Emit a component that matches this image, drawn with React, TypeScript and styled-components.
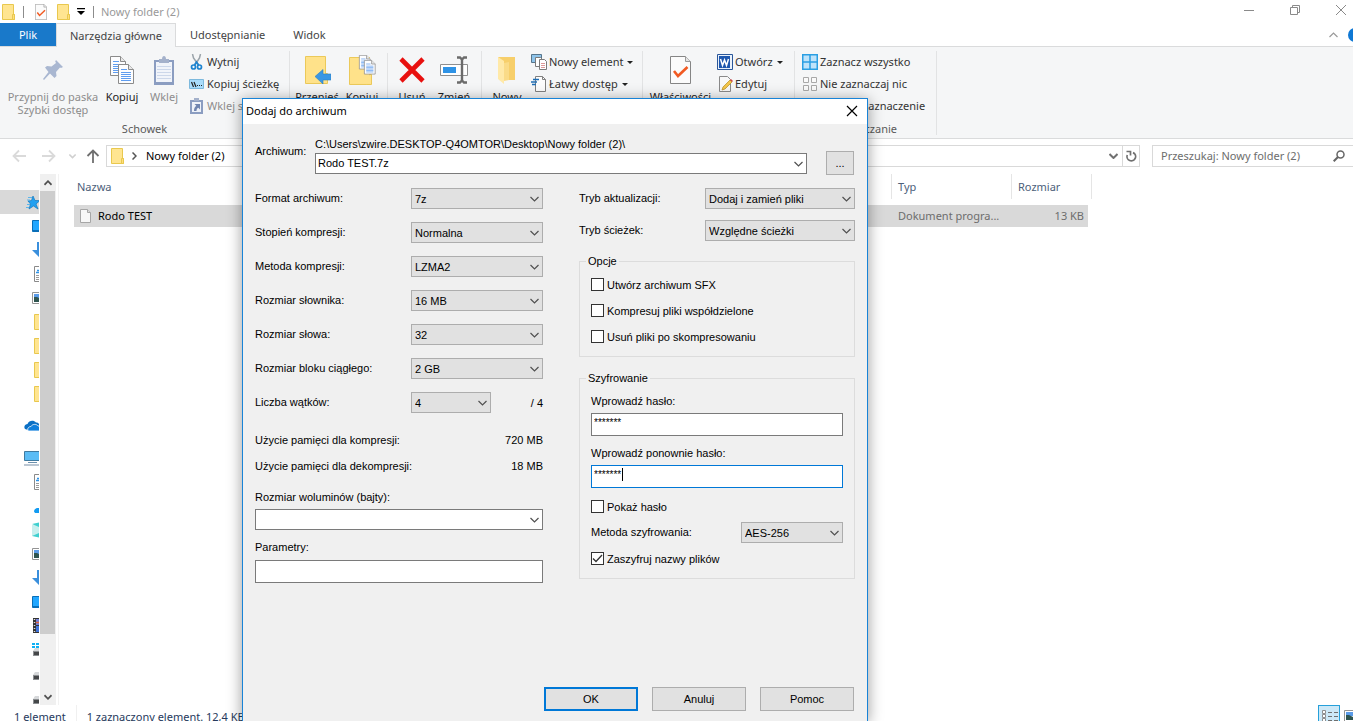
import React from "react";
import styled, { createGlobalStyle, css } from "styled-components";

const ui = '"Noto Sans", "Open Sans", sans-serif';
const classic = '"Liberation Sans", Arial, sans-serif';

const GlobalStyle = createGlobalStyle`
  *, *::before, *::after { box-sizing: border-box; }
  body { margin: 0; background: #fff; }
  button, input, select { font: inherit; color: inherit; margin: 0; border-radius: 0; }
  button { padding: 0; border: 0; background: none; }
  svg { display: block; flex: none; }
`;

const Explorer = styled.div`
  position: relative;
  display: flex;
  flex-direction: column;
  height: 100vh;
  overflow: hidden;
  font: 11px/16px ${ui};
  color: #1e1e1e;
`;

/* ---------- title bar ---------- */

const TitleBar = styled.header`
  display: flex;
  align-items: center;
  height: 23px;
  flex: none;
  padding-left: 2px;
`;

const QuickAccess = styled.div`
  display: flex;
  align-items: center;
  padding-left: 8px;
`;

const QuickButton = styled.button<{ $w: number }>`
  display: flex;
  justify-content: center;
  width: ${(p) => p.$w}px;
`;

const Tick = styled.span`
  width: 1px;
  height: 12px;
  background: #8c8c8c;
`;

const WindowTitle = styled.h1`
  margin: 0 0 0 7px;
  font-size: 11px;
  font-weight: 400;
  color: #999;
`;

const Captions = styled.div`
  display: flex;
  align-self: flex-start;
  margin-left: auto;
  margin-right: -11px;
`;

const CaptionButton = styled.button`
  display: flex;
  align-items: center;
  justify-content: center;
  width: 46px;
  height: 20px;
`;

/* ---------- ribbon ---------- */

const Tabs = styled.nav`
  display: flex;
  flex: none;
  height: 24px;
  border-bottom: 1px solid #dadbdc;
`;

const Tab = styled.button<{ $kind?: "file" | "active" }>`
  height: 24px;
  padding: 0 14px;
  color: #444;
  ${(p) =>
    p.$kind === "file" &&
    css`
      width: 56px;
      height: 23px;
      background: #1979ca;
      color: #fff;
    `}
  ${(p) =>
    p.$kind === "active" &&
    css`
      background: #f5f6f7;
      border: 1px solid #dadbdc;
      border-bottom: 0;
      padding: 0 13px;
    `}
`;

const TabTools = styled.div`
  display: flex;
  align-items: center;
  gap: 10px;
  margin: 0 -9px 0 auto;
`;

const Ribbon = styled.section`
  display: flex;
  flex: none;
  height: 92px;
  padding-top: 4px;
  background: #f5f6f7;
  border-bottom: 1px solid #dadbdc;
`;

const Group = styled.div<{ $width: number }>`
  display: flex;
  flex-direction: column;
  justify-content: space-between;
  width: ${(p) => p.$width}px;
  margin-bottom: 3px;
  border-right: 1px solid #e2e3e4;
`;

const GroupBody = styled.div`
  display: flex;
  padding-left: 4px;
`;

const GroupLabel = styled.div`
  line-height: 13px;
  text-align: center;
  color: #5a5a5a;
`;

const InnerRule = styled.span`
  width: 1px;
  height: 68px;
  margin: 2px 3px 0;
  background: #e2e3e4;
`;

const BigButton = styled.button<{ $w: number; $off?: boolean }>`
  display: flex;
  flex-direction: column;
  align-items: center;
  gap: 4px;
  width: ${(p) => p.$w}px;
  padding-top: 3px;
  line-height: 13px;
  white-space: nowrap;
  color: ${(p) => (p.$off ? "#8d8d8d" : "#1e1e1e")};
`;

const BigIcon = styled.span`
  display: flex;
  align-items: center;
  height: 32px;
`;

const SmallColumn = styled.div`
  display: flex;
  flex-direction: column;
  align-items: flex-start;
`;

const SmallButton = styled.button<{ $off?: boolean }>`
  display: flex;
  align-items: center;
  gap: 2px;
  height: 22px;
  padding-left: 3px;
  white-space: nowrap;
  color: ${(p) => (p.$off ? "#8d8d8d" : "#333")};
`;

const Caret = styled.span`
  margin-left: 2px;
  border: 3px solid transparent;
  border-top-color: #222;
  border-bottom: 0;
`;

/* ---------- address bar ---------- */

const AddressRow = styled.div`
  display: flex;
  flex: none;
  height: 35px;
  padding-top: 6px;
`;

const NavButtons = styled.div`
  display: flex;
  align-items: center;
  height: 22px;
  width: 106px;
  padding-left: 4px;
`;

const NavButton = styled.button<{ $w: number }>`
  display: flex;
  justify-content: center;
  width: ${(p) => p.$w}px;
`;

const AddressBox = styled.div`
  display: flex;
  align-items: center;
  flex: 1;
  height: 22px;
  padding-left: 4px;
  border: 1px solid #d9d9d9;
  color: #000;
`;

const Crumb = styled.span`
  flex: 1;
  margin-left: 9px;
`;

const CrumbArrow = styled.span`
  margin-left: 8px;
`;

const AddressButton = styled.button<{ $rule?: boolean }>`
  display: flex;
  align-items: center;
  justify-content: center;
  width: 17px;
  height: 20px;
  border-left: ${(p) => (p.$rule ? "1px solid #d9d9d9" : "0")};
`;

const SearchBox = styled.label`
  display: flex;
  align-items: center;
  justify-content: space-between;
  width: 201px;
  height: 22px;
  margin-left: 12px;
  padding: 0 8px;
  border: 1px solid #d9d9d9;
  border-right: 0;
`;

const SearchInput = styled.input`
  width: 165px;
  padding: 0;
  border: 0;
  outline: 0;
  background: none;
  &::placeholder { color: #6d6d6d; opacity: 1; }
`;

/* ---------- content ---------- */

const Content = styled.div`
  display: flex;
  flex: 1;
  min-height: 0;
`;

const Tree = styled.ul`
  width: 39px;
  margin: 0 1px 0 0;
  padding: 16px 0 0;
  overflow: hidden;
  list-style: none;
`;

const TreeItem = styled.li<{ $root?: boolean; $selected?: boolean; $gap?: boolean }>`
  display: flex;
  align-items: center;
  height: 24px;
  margin-top: ${(p) => (p.$gap ? 8 : 0)}px;
  padding-left: ${(p) => (p.$root ? 24 : 32)}px;
  background: ${(p) => (p.$selected ? "#d9d9d9" : "none")};
`;

const ScrollTrack = styled.div`
  display: flex;
  flex-direction: column;
  width: 16px;
  margin-right: 2px;
  background: #f0f0f0;
`;

const ScrollButton = styled.button`
  display: flex;
  align-items: center;
  justify-content: center;
  height: 17px;
  width: 15px;
`;

const ScrollThumb = styled.div`
  flex: 443;
  width: 15px;
  background: #cdcdcd;
`;

const ScrollRest = styled.div`
  flex: 54;
`;

const Files = styled.main`
  flex: 1;
  padding-left: 15px;
  border-left: 1px solid #f2f2f2;
`;

const FileTable = styled.table`
  width: 1014px;
  table-layout: fixed;
  border-collapse: separate;
  border-spacing: 0;
  tbody::before { content: ""; display: block; height: 6px; }
`;

const HeadCell = styled.th<{ $w?: number; $rule?: boolean; $last?: boolean }>`
  position: relative;
  width: ${(p) => (p.$w ? `${p.$w}px` : "auto")};
  height: 25px;
  padding: 0 0 0 ${(p) => (p.$rule ? 6 : 3)}px;
  border-left: ${(p) => (p.$rule ? "1px solid #e5e5e5" : "0")};
  font-weight: 400;
  text-align: left;
  color: #4c607a;
  ${(p) =>
    p.$last &&
    css`
      &::after {
        content: "";
        position: absolute;
        top: 0;
        right: -4px;
        width: 1px;
        height: 25px;
        background: #e5e5e5;
      }
    `}
`;

const Cell = styled.td<{ $name?: boolean; $right?: boolean }>`
  height: 22px;
  padding: 0 4px 0 ${(p) => (p.$name ? 5 : 7)}px;
  background: #d9d9d9;
  text-align: ${(p) => (p.$right ? "right" : "left")};
  color: ${(p) => (p.$name ? "#000" : "#6d6d6d")};
`;

const FileName = styled.span`
  display: flex;
  align-items: center;
  gap: 5px;
`;

const StatusBar = styled.footer`
  display: flex;
  flex: none;
  height: 16px;
  padding-left: 14px;
  overflow: hidden;
  line-height: 24px;
  color: #26395c;
`;

const StatusRule = styled.span`
  width: 1px;
  height: 16px;
  margin: 0 10px;
  background: #f0f0f0;
`;

const ViewModes = styled.div`
  display: flex;
  margin: 0 -9px 0 auto;
`;

const ViewButton = styled.button<{ $on?: boolean }>`
  display: flex;
  width: 22px;
  height: 22px;
  padding: 4px 0 0 3px;
  background: ${(p) => (p.$on ? "#cce8f7" : "none")};
  border: 1px solid ${(p) => (p.$on ? "#26a0da" : "transparent")};
`;

/* ---------- dialog ---------- */

const Dialog = styled.form`
  position: absolute;
  top: 98px;
  left: 242px;
  bottom: 0;
  display: flex;
  flex-direction: column;
  width: 626px;
  background: #f0f0f0;
  border: 1px solid #1883d7;
  border-bottom: 0;
  box-shadow: 0 2px 14px rgba(0, 0, 0, 0.4);
  font: 11px/14px ${classic};
  color: #000;
`;

const DialogTitle = styled.div`
  display: flex;
  align-items: center;
  justify-content: space-between;
  height: 25px;
  flex: none;
  padding: 0 9px 2px 3px;
  background: #fff;
  font: 11px/16px ${ui};
`;

const DialogBody = styled.div`
  display: flex;
  flex-direction: column;
  flex: 1;
  padding: 13px 12px 10px;
`;

const ArchiveRow = styled.div`
  display: flex;
  height: 38px;
  margin-bottom: 13px;
`;

const ArchiveLabel = styled.label`
  width: 60px;
  padding-top: 7px;
`;

const ArchiveField = styled.div`
  display: flex;
  flex-direction: column;
  flex: 1;
  gap: 2px;
  margin-right: 19px;
`;

const PushButton = styled.button<{ $w: number; $primary?: boolean }>`
  width: ${(p) => p.$w}px;
  height: 24px;
  background: #e1e1e1;
  border: ${(p) => (p.$primary ? "2px solid #0078d7" : "1px solid #adadad")};
`;

const BrowseButton = styled(PushButton)`
  align-self: flex-end;
  margin-right: 1px;
`;

const Columns = styled.div`
  display: grid;
  grid-template-columns: 288px 1fr;
  gap: 36px;
`;

const Column = styled.div`
  display: flex;
  flex-direction: column;
`;

const Rows = styled.div<{ $gap: number }>`
  display: flex;
  flex-direction: column;
  gap: ${(p) => p.$gap}px;
`;

const Row = styled.div`
  display: flex;
  align-items: center;
  justify-content: space-between;
  > label { padding-bottom: 2px; }
`;

const Threads = styled.div`
  display: flex;
  align-items: center;
  justify-content: space-between;
  width: 132px;
`;

const MemoryRows = styled(Rows)`
  margin: 20px 0 17px;
`;

const Field = styled.div<{ $top?: number; $gap?: number }>`
  display: flex;
  flex-direction: column;
  gap: ${(p) => p.$gap ?? 5}px;
  margin-top: ${(p) => p.$top ?? 0}px;
`;

const Stack = styled.span<{ $w?: number }>`
  display: grid;
  width: ${(p) => (p.$w ? `${p.$w}px` : "100%")};
  > * { grid-area: 1 / 1; }
  > svg { justify-self: end; align-self: center; margin-right: 4px; pointer-events: none; }
`;

const Select = styled.select`
  appearance: none;
  width: 100%;
  height: 21px;
  padding: 0 18px 0 3px;
  background: #e1e1e1;
  border: 1px solid #adadad;
`;

const TextBox = styled.input<{ $h?: number; $focus?: boolean }>`
  width: 100%;
  height: ${(p) => p.$h ?? 23}px;
  padding: 0 2px 2px;
  background: #fff;
  border: 1px solid ${(p) => (p.$focus ? "#0078d7" : "#7a7a7a")};
  outline: 0;
`;

const SecretBox = styled(TextBox)`
  padding: 0 2px 5px;
  font-size: 10px;
`;

const InsertionPoint = styled.i`
  width: 1px;
  height: 13px;
  margin: 3px 0 0 31px;
  background: #000;
`;

const Fieldset = styled.fieldset<{ $top: number; $pad: number }>`
  min-width: 0;
  margin: ${(p) => p.$top}px 0 0;
  padding: ${(p) => p.$pad}px 11px 12px;
  border: 1px solid #dcdcdc;
`;

const Legend = styled.legend`
  margin-left: -5px;
  padding: 0 2px;
`;

const CheckLabel = styled.label<{ $top?: number }>`
  display: flex;
  align-items: flex-start;
  gap: 3px;
  height: 14px;
  margin-top: ${(p) => p.$top ?? 0}px;
`;

const CheckStack = styled.span`
  display: grid;
  > * { grid-area: 1 / 1; }
  input:not(:checked) + svg { display: none; }
  svg { pointer-events: none; }
`;

const CheckInput = styled.input`
  appearance: none;
  width: 13px;
  height: 13px;
  background: #fff;
  border: 1px solid #333;
`;

const MethodRow = styled(Row)`
  margin: 8px 0 9px;
`;

const Footer = styled.div`
  display: flex;
  justify-content: flex-end;
  gap: 14px;
  margin-top: auto;
  padding-right: 1px;
`;

/* ---------- drawings ---------- */

const Chevron = ({ color = "#505050", up = false, w = 9, sw = 1.2 }: { color?: string; up?: boolean; w?: number; sw?: number }) => (
  <svg width={w} height="6" viewBox="0 0 9 6" fill="none" stroke={color} strokeWidth={sw}>
    <path d={up ? "M.5 5l4-4 4 4" : "M.5 1l4 4 4-4"} />
  </svg>
);

const Folder = () => (
  <svg width="13" height="16" viewBox="0 0 13 16">
    <path d="M.5.5h11v10h1v5h-12z" fill="#ffe591" stroke="#e9c84e" />
    <path d="M10.5 10.5h2v5h-2z" fill="#ffdf7c" stroke="#e9c84e" />
  </svg>
);

const SheetCheck = ({ w, h }: { w: number; h: number }) => (
  <svg width={w} height={h} viewBox="0 0 21 28">
    <path d="M.5.5h15l5 5v22H.5z" fill="#fbfbfb" stroke="#858585" />
    <path d="M15.5.5v5h5" fill="#e5e5e5" stroke="#9a9a9a" />
    <path d="M4 15l4 5 9.500-9" fill="none" stroke="#f15a22" strokeWidth="2.600" />
  </svg>
);

const PinIcon = () => (
  <svg width="20" height="20" viewBox="0 0 20 20">
    <path d="M13 0l7 7-2 1-1-.5-4 4.500.5 4-2 2-4.500-4.500L1 20l-1-1 5.500-7L2 7.500l2-1.500 4.500.500L13 3l-.8-1.500z" fill="#a9b7d1" />
  </svg>
);

const Page = ({ x, y }: { x: number; y: number }) => (
  <g transform={`translate(${x} ${y})`}>
    <path d="M.5.5h10l5 5v14H.5z" fill="#fdfdfe" stroke="#8b8b8b" />
    <path d="M10.500.5v5h5" fill="#e8e8e8" stroke="#8b8b8b" />
    <path d="M3 5.500h6M3 8.500h10M3 10.500h10M3 12.500h10M3 14.500h10M3 16.500h10" stroke="#5f9df0" />
  </g>
);

const CopyIcon = () => (
  <svg width="24" height="28" viewBox="0 0 24 28">
    <Page x={0} y={0} />
    <Page x={8} y={8} />
  </svg>
);

const PasteIcon = () => (
  <svg width="20" height="29" viewBox="0 0 20 29">
    <path d="M0 4h20v25H0z" fill="#8b9dc1" />
    <path d="M2 6h16v20H2z" fill="#f1f4fa" />
    <path d="M5 3h3c0-4 4-4 4 0h3v4H5z" fill="#a4b1cb" />
    <path d="M3 10.500h14M3 13.500h14M3 16.500h14M3 19.500h14M3 22.500h14" stroke="#ccd7ea" />
  </svg>
);

const ScissorsIcon = () => (
  <svg width="16" height="16" viewBox="0 0 16 16" fill="none">
    <path d="M3.500 0l1 4 5 7M11.500 0l-1 4L6 11" stroke="#9aa3aa" strokeWidth="1.500" />
    <circle cx="4.500" cy="13" r="2" stroke="#1e84d0" strokeWidth="1.700" />
    <circle cx="10.500" cy="13" r="2" stroke="#1e84d0" strokeWidth="1.700" />
    <path d="M5.500 11l2-3 2 3" stroke="#1e84d0" strokeWidth="1.700" />
  </svg>
);

const PathIcon = () => (
  <svg width="16" height="16" viewBox="0 0 16 16">
    <path d="M.5 3.500h14v9H.5z" fill="#a9dcfb" stroke="#7db9dd" />
    <path d="M2.500 6l2 5M5 6l2 5" stroke="#222" strokeWidth="1.200" />
    <path d="M8 9.500h1M10 9.500h1M12 9.500h1" stroke="#222" />
  </svg>
);

const ShortcutIcon = () => (
  <svg width="16" height="16" viewBox="0 0 16 16">
    <path d="M1 2h13v14H1z" fill="#8b9dc1" />
    <path d="M3 4h9v10H3z" fill="#eef2f9" />
    <path d="M5 0h5v3H5z" fill="#a4b1cb" />
    <path d="M5.500 6H11v5.500L9.300 9.800C8 10.500 7.500 11.500 7.500 13H5c0-2.500.8-4 2.300-5.200z" fill="#7085b0" />
  </svg>
);

const MoveIcon = () => (
  <svg width="28" height="28" viewBox="0 0 28 28">
    <path d="M2.500.5h20v27h-20z" fill="#ffe28a" stroke="#ebc95a" />
    <path d="M22.500 17.500h2v10h-5" fill="#ffe28a" stroke="#ebc95a" />
    <path d="M12 20.500l8-7v4.500h8v6h-8v4z" fill="#3a97e4" stroke="#2b7fc4" strokeWidth=".6" />
  </svg>
);

const CopyToIcon = () => (
  <svg width="28" height="30" viewBox="0 0 28 30">
    <path d="M1.500 2.500h20v27h-20z" fill="#ffe28a" stroke="#ebc95a" />
    <path d="M21.500 19.500h2v10h-5" fill="#ffe28a" stroke="#ebc95a" />
    <g transform="translate(11 0) scale(.72)">
      <Page x={0} y={0} />
      <Page x={7} y={7} />
    </g>
  </svg>
);

const DeleteIcon = () => (
  <svg width="26" height="26" viewBox="0 0 26 26">
    <path d="M2 2l22 22M24 2L2 24" stroke="#e8110f" strokeWidth="4.600" />
  </svg>
);

const RenameIcon = () => (
  <svg width="28" height="28" viewBox="0 0 28 28" fill="none">
    <path d="M.5 8.500h27v11H.5z" fill="#fff" stroke="#8f8f8f" />
    <path d="M3 11h13v6H3z" fill="#2f93e6" />
    <path d="M17 1.500h3l2 2 2-2h3M17 26.500h3l2-2 2 2h3M22 3v22" stroke="#6b6b6b" strokeWidth="2.400" />
  </svg>
);

const NewFolderIcon = () => (
  <svg width="20" height="28" viewBox="0 0 20 28">
    <path d="M1 1h17v23H7z" fill="#f7cf6b" />
    <path d="M1 1l6 4v23l-6-5z" fill="#ffe9a8" />
    <path d="M7 7l5-1v18l-5 1z" fill="#fadb88" />
  </svg>
);

const NewItemIcon = () => (
  <svg width="16" height="16" viewBox="0 0 16 16">
    <path d="M.5.500h10v8H.500z" fill="#8fc4ea" stroke="#56758c" />
    <path d="M4.500 3.500h5l2 2v7h-7z" fill="#fff" stroke="#7b7b7b" />
    <path d="M8.500 5.500h5l2 2v8h-7z" fill="#fff" stroke="#7b7b7b" />
    <path d="M10 9.500h4M10 11.500h4M10 13.500h4" stroke="#d99" />
  </svg>
);

const EasyAccessIcon = () => (
  <svg width="16" height="16" viewBox="0 0 16 16">
    <path d="M4.500.500h7l3 3v12h-10z" fill="#fcfcfc" stroke="#808080" />
    <path d="M11.500.500v3h3" fill="none" stroke="#808080" />
    <path d="M2 3.500h6M0 6h6M1 8.500h4" stroke="#1f6eb4" strokeWidth="1.300" />
  </svg>
);

const WordIcon = () => (
  <svg width="16" height="16" viewBox="0 0 16 16">
    <path d="M.5.500h15v15H.500z" fill="#e9f1fb" stroke="#2a579a" />
    <path d="M2 2h11v12H2z" fill="#1e57ae" />
    <path d="M3.500 5l2 6.500L7.500 6l2 5.500L11.500 5" fill="none" stroke="#fff" strokeWidth="1.500" />
  </svg>
);

const EditIcon = () => (
  <svg width="16" height="16" viewBox="0 0 16 16">
    <path d="M2.500.500h8l3 3v12h-11z" fill="#f8f8f8" stroke="#8a8a8a" />
    <path d="M5 14l1-3 7-7 2 2-7 7z" fill="#f3c64b" stroke="#b98e1d" strokeWidth=".7" />
    <path d="M13 4l1-1 2 2-1 1z" fill="#d2434a" />
  </svg>
);

const FourSquares = ({ on }: { on?: boolean }) => (
  <svg width="16" height="16" viewBox="0 0 16 16">
    {on ? (
      <path d="M.75.75h14.500v14.500H.75zM8 1v14M1 8h14" fill="#bfe3fa" stroke="#2b9fe3" strokeWidth="1.500" />
    ) : (
      <path d="M1.500 1.500h5v5h-5zM9.500 1.500h5v5h-5zM1.500 9.500h5v5h-5zM9.500 9.500h5v5h-5z" fill="#fafafa" stroke="#a8a8a8" />
    )}
  </svg>
);

const InvertIcon = () => (
  <svg width="16" height="16" viewBox="0 0 16 16">
    <path d="M1.500 1.500h5v5h-5zM9.500 9.500h5v5h-5z" fill="#bfe3fa" stroke="#2b9fe3" />
  </svg>
);

const Arrow = ({ d, color }: { d: string; color: string }) => (
  <svg width="14" height="14" viewBox="0 0 14 14" fill="none" stroke={color} strokeWidth="1.800">
    <path d={d} />
  </svg>
);

const StarIcon = () => (
  <svg width="16" height="16" viewBox="0 0 16 16">
    <path d="M9 2l2 4.500h5l-4 3.500 2 5-4.500-3L5 15l1.500-5L4 7l3.500-.5z" fill="#22a0f0" stroke="#1479bd" strokeWidth=".7" />
    <path d="M4 3.500h4M3 6h3M3 10.500h3M2 13.500h3" stroke="#5bb5ea" />
  </svg>
);

const DesktopIcon = () => (
  <svg width="16" height="12" viewBox="0 0 16 12">
    <path d="M.5.500h15v11H.500z" fill="#22a7ff" stroke="#0a6fb8" />
    <path d="M1 10.500h14" stroke="#0a6fb8" />
  </svg>
);

const DownloadIcon = () => (
  <svg width="16" height="16" viewBox="0 0 16 16">
    <path d="M5 0h5v8h5l-7.500 7.500L0 8h5z" fill="#3a8fdc" />
  </svg>
);

const DocIcon = () => (
  <svg width="16" height="16" viewBox="0 0 16 16">
    <path d="M2.500.500h11v15h-11z" fill="#fff" stroke="#8a8a8a" />
    <path d="M5 4.500h4M4 6.500h8" stroke="#2f93e6" strokeWidth="1.500" />
    <path d="M4 9.500h8M4 11.500h8M4 13.500h8" stroke="#9a9a9a" />
  </svg>
);

const PictureIcon = () => (
  <svg width="16" height="12" viewBox="0 0 16 12">
    <path d="M.5.500h15v11H.500z" fill="#fff" stroke="#949494" />
    <path d="M2 2h12v4H2z" fill="#5a9be8" />
    <path d="M2 5l3 0 4 2h5v3H2z" fill="#2f5550" />
  </svg>
);

const TreeFolder = () => (
  <svg width="16" height="16" viewBox="0 0 16 16">
    <path d="M2.500.500h12v15h-12z" fill="#ffe591" stroke="#e9c84e" />
  </svg>
);

const CloudsIcon = () => (
  <svg width="16" height="12" viewBox="0 0 16 12">
    <path d="M1 9C-1 6 2 4 3.500 4 5 0 10 0 12 2.500c2 0 3 1 4 3V10H4z" fill="#0a6fc4" />
    <path d="M4 11c-1-3 1-4.500 3-4.500C8.500 3.500 13 4 14 6h2v5z" fill="#0f7fdc" stroke="#fff" strokeWidth=".8" />
  </svg>
);

const ComputerIcon = () => (
  <svg width="16" height="16" viewBox="0 0 16 16">
    <path d="M.5 1.500h16v9H.500z" fill="#5bbcf5" stroke="#3f7aa0" />
    <path d="M4 12.500h9" stroke="#6b90ad" />
    <path d="M0 15h16" stroke="#a4b4c4" strokeWidth="1.500" />
  </svg>
);

const CloudIcon = () => (
  <svg width="16" height="16" viewBox="0 0 16 16">
    <path d="M2 13.500C2 11 4 10.500 5 10h10v5H3z" fill="#129bf2" />
  </svg>
);

const CubeIcon = () => (
  <svg width="16" height="16" viewBox="0 0 16 16">
    <path d="M0 3h14v11H0z" fill="#c7efee" />
    <path d="M0 2l9-2v6zM0 14l9-4v6z" fill="#40cfcf" />
  </svg>
);

const FilmIcon = () => (
  <svg width="16" height="16" viewBox="0 0 16 16">
    <path d="M1 0h14v15H1z" fill="#333" />
    <path d="M4 1h10v6H4z" fill="#6f7fd8" />
    <path d="M4 4.500h10" stroke="#e2603f" strokeWidth="1.500" />
    <path d="M4 8h10v6H4z" fill="#3e72d8" />
    <path d="M2.500 1v14" stroke="#ddd" strokeWidth="1.500" strokeDasharray="1 2" />
  </svg>
);

const DiskIcon = ({ win }: { win?: boolean }) => (
  <svg width="16" height="16" viewBox="0 0 16 16">
    <path d="M1 9l2-3h12v4H1z" fill="#d6d8da" />
    <path d="M1 9h14v5H1z" fill="#8b8e91" />
    <path d="M2 10h12v3H2z" fill="#454749" />
    {win && <path d="M0 1h3v2H0zM4 1h3v2H4zM0 4h3v2H0zM4 4h3v2H4z" fill="#10b0f4" />}
  </svg>
);

/* ---------- pieces ---------- */

const Picker = ({ id, value, width }: { id: string; value: string; width?: number }) => (
  <Stack $w={width}>
    <Select id={id} defaultValue={value}>
      <option>{value}</option>
    </Select>
    <Chevron />
  </Stack>
);

const Combo = ({ id, value = "" }: { id: string; value?: string }) => (
  <Stack>
    <TextBox id={id} $h={21} defaultValue={value} />
    <Chevron />
  </Stack>
);

const Check = ({ children, checked, top }: { children: string; checked?: boolean; top?: number }) => (
  <CheckLabel $top={top}>
    <CheckStack>
      <CheckInput type="checkbox" defaultChecked={checked} />
      <svg width="13" height="13" viewBox="0 0 13 13" fill="none" stroke="#333" strokeWidth="1.300">
        <path d="M2 6.500l3 3 6-6.500" />
      </svg>
    </CheckStack>
    {children}
  </CheckLabel>
);

const compression = [
  { id: "format", label: "Format archiwum:", value: "7z" },
  { id: "level", label: "Stopień kompresji:", value: "Normalna" },
  { id: "method", label: "Metoda kompresji:", value: "LZMA2" },
  { id: "dictionary", label: "Rozmiar słownika:", value: "16 MB" },
  { id: "word", label: "Rozmiar słowa:", value: "32" },
  { id: "block", label: "Rozmiar bloku ciągłego:", value: "2 GB" },
];

const modes = [
  { id: "update", label: "Tryb aktualizacji:", value: "Dodaj i zamień pliki" },
  { id: "paths", label: "Tryb ścieżek:", value: "Względne ścieżki" },
];

const treeItems: { icon: React.ReactNode; root?: boolean; selected?: boolean; gap?: boolean }[] = [
  { icon: <StarIcon />, root: true, selected: true },
  { icon: <DesktopIcon /> },
  { icon: <DownloadIcon /> },
  { icon: <DocIcon /> },
  { icon: <PictureIcon /> },
  { icon: <TreeFolder /> },
  { icon: <TreeFolder /> },
  { icon: <TreeFolder /> },
  { icon: <TreeFolder /> },
  { icon: <CloudsIcon />, root: true, gap: true },
  { icon: <ComputerIcon />, root: true, gap: true },
  { icon: <DocIcon /> },
  { icon: <CloudIcon /> },
  { icon: <CubeIcon /> },
  { icon: <PictureIcon /> },
  { icon: <DownloadIcon /> },
  { icon: <DesktopIcon /> },
  { icon: <FilmIcon /> },
  { icon: <DiskIcon win /> },
  { icon: <DiskIcon /> },
  { icon: <DiskIcon /> },
];

const ArchiveDialog = () => (
  <Dialog onSubmit={(e) => e.preventDefault()}>
    <DialogTitle>
      Dodaj do archiwum
      <button type="button" aria-label="Zamknij">
        <svg width="12" height="12" viewBox="0 0 12 12" stroke="#000" strokeWidth="1.200">
          <path d="M1 1l10 10M11 1L1 11" />
        </svg>
      </button>
    </DialogTitle>
    <DialogBody>
      <ArchiveRow>
        <ArchiveLabel htmlFor="archive">Archiwum:</ArchiveLabel>
        <ArchiveField>
          <span>C:\Users\zwire.DESKTOP-Q4OMTOR\Desktop\Nowy folder (2)\</span>
          <Combo id="archive" value="Rodo TEST.7z" />
        </ArchiveField>
        <BrowseButton type="button" $w={28}>...</BrowseButton>
      </ArchiveRow>
      <Columns>
        <Column>
          <Rows $gap={13}>
            {compression.map((f) => (
              <Row key={f.id}>
                <label htmlFor={f.id}>{f.label}</label>
                <Picker id={f.id} value={f.value} width={132} />
              </Row>
            ))}
            <Row>
              <label htmlFor="threads">Liczba wątków:</label>
              <Threads>
                <Picker id="threads" value="4" width={80} />
                <span>/ 4</span>
              </Threads>
            </Row>
          </Rows>
          <MemoryRows $gap={12}>
            <Row>
              <span>Użycie pamięci dla kompresji:</span>
              <span>720 MB</span>
            </Row>
            <Row>
              <span>Użycie pamięci dla dekompresji:</span>
              <span>18 MB</span>
            </Row>
          </MemoryRows>
          <Field>
            <label htmlFor="volumes">Rozmiar woluminów (bajty):</label>
            <Combo id="volumes" />
          </Field>
          <Field $top={10} $gap={6}>
            <label htmlFor="params">Parametry:</label>
            <TextBox id="params" />
          </Field>
        </Column>
        <Column>
          <Rows $gap={11}>
            {modes.map((f) => (
              <Row key={f.id}>
                <label htmlFor={f.id}>{f.label}</label>
                <Picker id={f.id} value={f.value} width={150} />
              </Row>
            ))}
          </Rows>
          <Fieldset $top={13} $pad={10}>
            <Legend>Opcje</Legend>
            <Rows $gap={12}>
              <Check>Utwórz archiwum SFX</Check>
              <Check>Kompresuj pliki współdzielone</Check>
              <Check>Usuń pliki po skompresowaniu</Check>
            </Rows>
          </Fieldset>
          <Fieldset $top={14} $pad={9}>
            <Legend>Szyfrowanie</Legend>
            <Field>
              <label htmlFor="secret">Wprowadź hasło:</label>
              <SecretBox id="secret" autoComplete="off" defaultValue="*******" />
            </Field>
            <Field $top={10}>
              <label htmlFor="repeat">Wprowadź ponownie hasło:</label>
              <Stack>
                <SecretBox id="repeat" autoComplete="off" $focus defaultValue="*******" />
                <InsertionPoint />
              </Stack>
            </Field>
            <Check top={12}>Pokaż hasło</Check>
            <MethodRow>
              <label htmlFor="cipher">Metoda szyfrowania:</label>
              <Picker id="cipher" value="AES-256" width={102} />
            </MethodRow>
            <Check checked>Zaszyfruj nazwy plików</Check>
          </Fieldset>
        </Column>
      </Columns>
      <Footer>
        <PushButton $w={94} $primary>OK</PushButton>
        <PushButton type="button" $w={94}>Anuluj</PushButton>
        <PushButton type="button" $w={94}>Pomoc</PushButton>
      </Footer>
    </DialogBody>
  </Dialog>
);

const RibbonBar = () => (
  <Ribbon>
    <Group $width={290}>
      <GroupBody>
        <BigButton $w={98} $off>
          <BigIcon><PinIcon /></BigIcon>
          <span>Przypnij do paska<br />Szybki dostęp</span>
        </BigButton>
        <BigButton $w={40}>
          <BigIcon><CopyIcon /></BigIcon>
          Kopiuj
        </BigButton>
        <BigButton $w={44} $off>
          <BigIcon><PasteIcon /></BigIcon>
          Wklej
        </BigButton>
        <SmallColumn>
          <SmallButton><ScissorsIcon />Wytnij</SmallButton>
          <SmallButton><PathIcon />Kopiuj ścieżkę</SmallButton>
          <SmallButton $off><ShortcutIcon />Wklej skrót</SmallButton>
        </SmallColumn>
      </GroupBody>
      <GroupLabel>Schowek</GroupLabel>
    </Group>
    <Group $width={192}>
      <GroupBody>
        <BigButton $w={46}><BigIcon><MoveIcon /></BigIcon>Przenieś</BigButton>
        <BigButton $w={44}><BigIcon><CopyToIcon /></BigIcon>Kopiuj</BigButton>
        <InnerRule />
        <BigButton $w={42}><BigIcon><DeleteIcon /></BigIcon>Usuń</BigButton>
        <BigButton $w={42}><BigIcon><RenameIcon /></BigIcon>Zmień</BigButton>
      </GroupBody>
    </Group>
    <Group $width={161}>
      <GroupBody>
        <BigButton $w={42}><BigIcon><NewFolderIcon /></BigIcon>Nowy</BigButton>
        <SmallColumn>
          <SmallButton><NewItemIcon />Nowy element<Caret /></SmallButton>
          <SmallButton><EasyAccessIcon />Łatwy dostęp<Caret /></SmallButton>
        </SmallColumn>
      </GroupBody>
    </Group>
    <Group $width={152}>
      <GroupBody>
        <BigButton $w={67}><BigIcon><SheetCheck w={21} h={28} /></BigIcon>Właściwości</BigButton>
        <SmallColumn>
          <SmallButton><WordIcon />Otwórz<Caret /></SmallButton>
          <SmallButton><EditIcon />Edytuj</SmallButton>
        </SmallColumn>
      </GroupBody>
    </Group>
    <Group $width={142}>
      <GroupBody>
        <SmallColumn>
          <SmallButton><FourSquares on />Zaznacz wszystko</SmallButton>
          <SmallButton><FourSquares />Nie zaznaczaj nic</SmallButton>
          <SmallButton><InvertIcon />Odwróć zaznaczenie</SmallButton>
        </SmallColumn>
      </GroupBody>
      <GroupLabel>Zaznaczanie</GroupLabel>
    </Group>
  </Ribbon>
);

export default function App() {
  return (
    <>
      <GlobalStyle />
      <Explorer>
        <TitleBar>
          <Folder />
          <QuickAccess>
            <Tick />
            <QuickButton $w={34} aria-label="Właściwości"><SheetCheck w={12} h={16} /></QuickButton>
            <QuickButton $w={11} aria-label="Nowy folder"><Folder /></QuickButton>
            <QuickButton $w={24} aria-label="Dostosuj">
              <svg width="8" height="7" viewBox="0 0 8 7"><path d="M0 0h8v1.300H0zM0 3h8L4 7z" fill="#000" /></svg>
            </QuickButton>
            <Tick />
          </QuickAccess>
          <WindowTitle>Nowy folder (2)</WindowTitle>
          <Captions>
            <CaptionButton aria-label="Minimalizuj">
              <svg width="10" height="10" viewBox="0 0 10 10" stroke="#8a8a8a"><path d="M0 5.500h10" /></svg>
            </CaptionButton>
            <CaptionButton aria-label="Przywróć">
              <svg width="10" height="10" viewBox="0 0 10 10" fill="none" stroke="#8a8a8a"><path d="M.5 2.500h7v7h-7zM2.500 2.500v-2h7v7h-2" /></svg>
            </CaptionButton>
            <CaptionButton aria-label="Zamknij okno">
              <svg width="10" height="10" viewBox="0 0 10 10" stroke="#8a8a8a"><path d="M0 0l10 10M10 0L0 10" /></svg>
            </CaptionButton>
          </Captions>
        </TitleBar>
        <Tabs>
          <Tab $kind="file">Plik</Tab>
          <Tab $kind="active">Narzędzia główne</Tab>
          <Tab>Udostępnianie</Tab>
          <Tab>Widok</Tab>
          <TabTools>
            <button aria-label="Zwiń wstążkę"><Chevron up color="#9a9a9a" /></button>
            <button aria-label="Pomoc">
              <svg width="14" height="14" viewBox="0 0 14 14"><circle cx="7" cy="7" r="7" fill="#0f78d4" /></svg>
            </button>
          </TabTools>
        </Tabs>
        <RibbonBar />
        <AddressRow>
          <NavButtons>
            <NavButton $w={30} aria-label="Wstecz"><Arrow color="#dadada" d="M14 7H1.500M7 1.500L1.500 7 7 12.500" /></NavButton>
            <NavButton $w={30} aria-label="Dalej"><Arrow color="#dadada" d="M0 7h12.500M7 1.500L12.500 7 7 12.500" /></NavButton>
            <NavButton $w={16} aria-label="Ostatnie lokalizacje"><Chevron w={7} color="#d0d0d0" sw={2} /></NavButton>
            <NavButton $w={26} aria-label="W górę"><Arrow color="#6f6f6f" d="M7 14V2M1.500 7L7 1.500 12.500 7" /></NavButton>
          </NavButtons>
          <AddressBox>
            <Folder />
            <CrumbArrow>
              <svg width="5" height="8" viewBox="0 0 5 8" fill="none" stroke="#555" strokeWidth="1.500"><path d="M.5.500L4 4 .5 7.500" /></svg>
            </CrumbArrow>
            <Crumb>Nowy folder (2)</Crumb>
            <AddressButton aria-label="Poprzednie lokalizacje"><Chevron sw={2} color="#707070" /></AddressButton>
            <AddressButton $rule aria-label="Odśwież">
              <svg width="12" height="12" viewBox="0 0 12 12" fill="none" stroke="#707070" strokeWidth="1.700">
                <path d="M8 2.600A4.300 4.300 0 1 1 2.300 5M1.500 1.500h4v4" />
              </svg>
            </AddressButton>
          </AddressBox>
          <SearchBox>
            <SearchInput type="search" placeholder="Przeszukaj: Nowy folder (2)" />
            <svg width="12" height="12" viewBox="0 0 12 12" fill="none" stroke="#666" strokeWidth="1.500">
              <circle cx="7.500" cy="4.500" r="3.500" />
              <path d="M5 7L.7 11.300" strokeWidth="2" />
            </svg>
          </SearchBox>
        </AddressRow>
        <Content>
          <Tree>
            {treeItems.map((t, i) => (
              <TreeItem key={i} $root={t.root} $selected={t.selected} $gap={t.gap}>{t.icon}</TreeItem>
            ))}
          </Tree>
          <ScrollTrack>
            <ScrollButton aria-label="Przewiń w górę"><Chevron up w={8} sw={2} /></ScrollButton>
            <ScrollThumb />
            <ScrollRest />
            <ScrollButton aria-label="Przewiń w dół"><Chevron w={8} sw={2} /></ScrollButton>
          </ScrollTrack>
          <Files>
            <FileTable>
              <thead>
                <tr>
                  <HeadCell>Nazwa</HeadCell>
                  <HeadCell $w={120} $rule>Typ</HeadCell>
                  <HeadCell $w={77} $rule $last>Rozmiar</HeadCell>
                </tr>
              </thead>
              <tbody>
                <tr>
                  <Cell $name>
                    <FileName>
                      <svg width="14" height="14" viewBox="0 0 14 14">
                        <path d="M1.500.500h7l3 3v10h-10z" fill="#f7f7f7" stroke="#a6a6a6" />
                        <path d="M8.500.500v3h3" fill="#ddd" stroke="#a6a6a6" />
                      </svg>
                      Rodo TEST
                    </FileName>
                  </Cell>
                  <Cell>Dokument progra...</Cell>
                  <Cell $right>13 KB</Cell>
                </tr>
              </tbody>
            </FileTable>
          </Files>
        </Content>
        <StatusBar>
          <span>1 element</span>
          <StatusRule />
          <span>1 zaznaczony element. 12,4 KB</span>
          <ViewModes>
            <ViewButton $on aria-label="Szczegóły">
              <svg width="16" height="12" viewBox="0 0 16 12" fill="none">
                <path d="M.5.500h3v3h-3zM.500 4.500h3v3h-3zM.500 8.500h3v3h-3z" fill="#fff" stroke="#8e8e8e" />
                <path d="M6 2.500h4M12 2.500h4M6 6.500h4M12 6.500h4M6 10.500h4M12 10.500h4" stroke="#707070" />
              </svg>
            </ViewButton>
            <ViewButton aria-label="Miniatury"><PictureIcon /></ViewButton>
          </ViewModes>
        </StatusBar>
        <ArchiveDialog />
      </Explorer>
    </>
  );
}
